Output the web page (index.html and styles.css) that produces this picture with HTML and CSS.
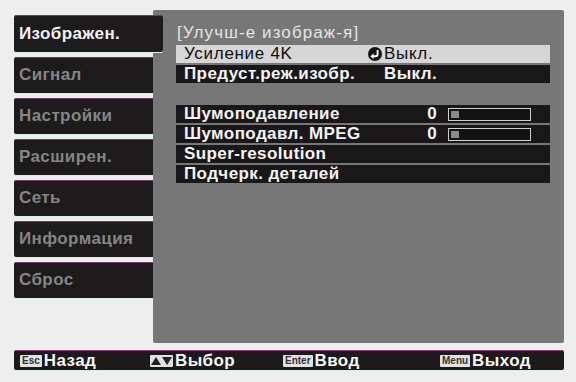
FILE: index.html
```html
<!DOCTYPE html>
<html lang="ru">
<head>
<meta charset="utf-8">
<link rel="stylesheet" href="styles.css">
</head>
<body>
<div class="screen">
  <div class="main">
    <nav class="tabs">
      <div class="tab active">Изображен.</div>
      <div class="tab">Сигнал</div>
      <div class="tab">Настройки</div>
      <div class="tab">Расширен.</div>
      <div class="tab">Сеть</div>
      <div class="tab">Информация</div>
      <div class="tab">Сброс</div>
    </nav>
    <section class="panel">
      <div class="title">[Улучш-е изображ-я]</div>
      <div class="group">
        <div class="row selected">
          <span class="label">Усиление 4K</span>
          <span class="value"><svg class="ret" viewBox="0 0 14 14" width="14" height="14"><circle cx="7" cy="7" r="7" fill="#141414"/><path d="M9.6 3 V7.2 A2 2 0 0 1 7.6 9.2 H5" fill="none" stroke="#fff" stroke-width="1.9"/><path d="M2.4 9.2 L5.6 6.5 V11.9 Z" fill="#fff"/></svg>Выкл.</span>
        </div>
        <div class="row">
          <span class="label">Предуст.реж.изобр.</span>
          <span class="value"><span class="noicon"></span>Выкл.</span>
        </div>
      </div>
      <div class="group second">
        <div class="row">
          <span class="label">Шумоподавление</span>
          <span class="num">0</span>
          <span class="slider"><span class="knob"></span></span>
        </div>
        <div class="row">
          <span class="label">Шумоподавл. MPEG</span>
          <span class="num">0</span>
          <span class="slider"><span class="knob"></span></span>
        </div>
        <div class="row">
          <span class="label">Super-resolution</span>
        </div>
        <div class="row">
          <span class="label">Подчерк. деталей</span>
        </div>
      </div>
    </section>
  </div>
  <footer class="footer">
    <div class="hint"><span class="key">Esc</span>Назад</div>
    <div class="hint"><span class="key arrows"><span class="tri up"></span><span class="tri down"></span></span>Выбор</div>
    <div class="hint"><span class="key">Enter</span>Ввод</div>
    <div class="hint"><span class="key">Menu</span>Выход</div>
  </footer>
</div>
</body>
</html>
```

FILE: styles.css
```css
* { box-sizing: border-box; }
html, body { margin: 0; padding: 0; }
body {
  width: 576px;
  height: 382px;
  background: #eeeeee;
  font-family: "Liberation Sans", Arial, sans-serif;
  overflow: hidden;
}
.screen {
  padding: 10px 12px 0 14px;
}
.main {
  display: flex;
  height: 333px;
}
.tabs {
  width: 139px;
  flex: none;
  padding-top: 5px;
  display: flex;
  flex-direction: column;
  gap: 5px;
}
.tab {
  height: 36px;
  background: #1d1b1c;
  border-top: 1px solid #6e3a66;
  box-shadow: 0 1px 0 #d6efe4;
  border-radius: 2px 0 0 2px;
  color: #858585;
  font-weight: bold;
  font-size: 17px;
  letter-spacing: 0.4px;
  line-height: 34px;
  padding-left: 5px;
  white-space: nowrap;
}
.tab.active {
  width: 149px;
  height: 37px;
  color: #f2f2f2;
  position: relative;
  z-index: 2;
  border-radius: 2px;
  line-height: 35px;
}
.panel {
  flex: 1;
  background: #777777;
  border-radius: 2px;
  padding: 14px 14px 0 23px;
  color: #f4f4f4;
}
.title {
  font-size: 17px;
  line-height: 18px;
  height: 21px;
  padding-left: 1px;
  letter-spacing: 1.1px;
  color: #e4e4e4;
}
.group {
  display: flex;
  flex-direction: column;
  gap: 2px;
}
.group.second {
  margin-top: 22px;
}
.row {
  height: 18px;
  background: #1a1718;
  display: flex;
  align-items: center;
  padding-left: 8px;
  font-size: 17px;
  line-height: 18px;
  font-weight: bold;
  letter-spacing: 0.4px;
  color: #f4f4f4;
  white-space: nowrap;
}
.row.selected {
  background: #d6d6d6;
  color: #0e0e0e;
  font-weight: normal;
  letter-spacing: 0.7px;
}
.label {
  width: 184px;
  flex: none;
}
.value {
  display: flex;
  align-items: center;
}
.ret {
  margin-right: 2px;
  flex: none;
}
.noicon {
  display: inline-block;
  width: 16px;
}
.num {
  width: 69px;
  text-align: right;
  flex: none;
}
.slider {
  margin-left: 11px;
  width: 83px;
  height: 13px;
  border: 1.5px solid #d0d0d0;
  background: #151213;
  display: flex;
  align-items: center;
  padding-left: 2px;
}
.knob {
  width: 8px;
  height: 7px;
  background: #8a8a8a;
}
.footer {
  margin-top: 7px;
  height: 20px;
  background: #1c1a1b;
  border-top: 1px solid #8a3a80;
  box-shadow: 0 1px 0 #d6efe4;
  border-radius: 2px;
  display: grid;
  grid-template-columns: 130px 133px 157px 1fr;
  padding-left: 6px;
  align-items: center;
}
.hint {
  display: flex;
  align-items: center;
  color: #f6f6f6;
  font-weight: bold;
  font-size: 17px;
  letter-spacing: 0.4px;
  line-height: 18px;
}
.key {
  display: inline-flex;
  align-items: center;
  justify-content: center;
  height: 12px;
  padding: 0 2px;
  margin-right: 2px;
  background: #e2e2e2;
  color: #333;
  font-size: 10px;
  font-weight: bold;
  letter-spacing: 0;
  line-height: 12px;
  border-radius: 1px;
}
.key.arrows {
  width: 23px;
  gap: 1px;
}
.tri {
  width: 0;
  height: 0;
  border-left: 5px solid transparent;
  border-right: 5px solid transparent;
}
.tri.up { border-bottom: 8px solid #222; }
.tri.down { border-top: 8px solid #222; }
```
